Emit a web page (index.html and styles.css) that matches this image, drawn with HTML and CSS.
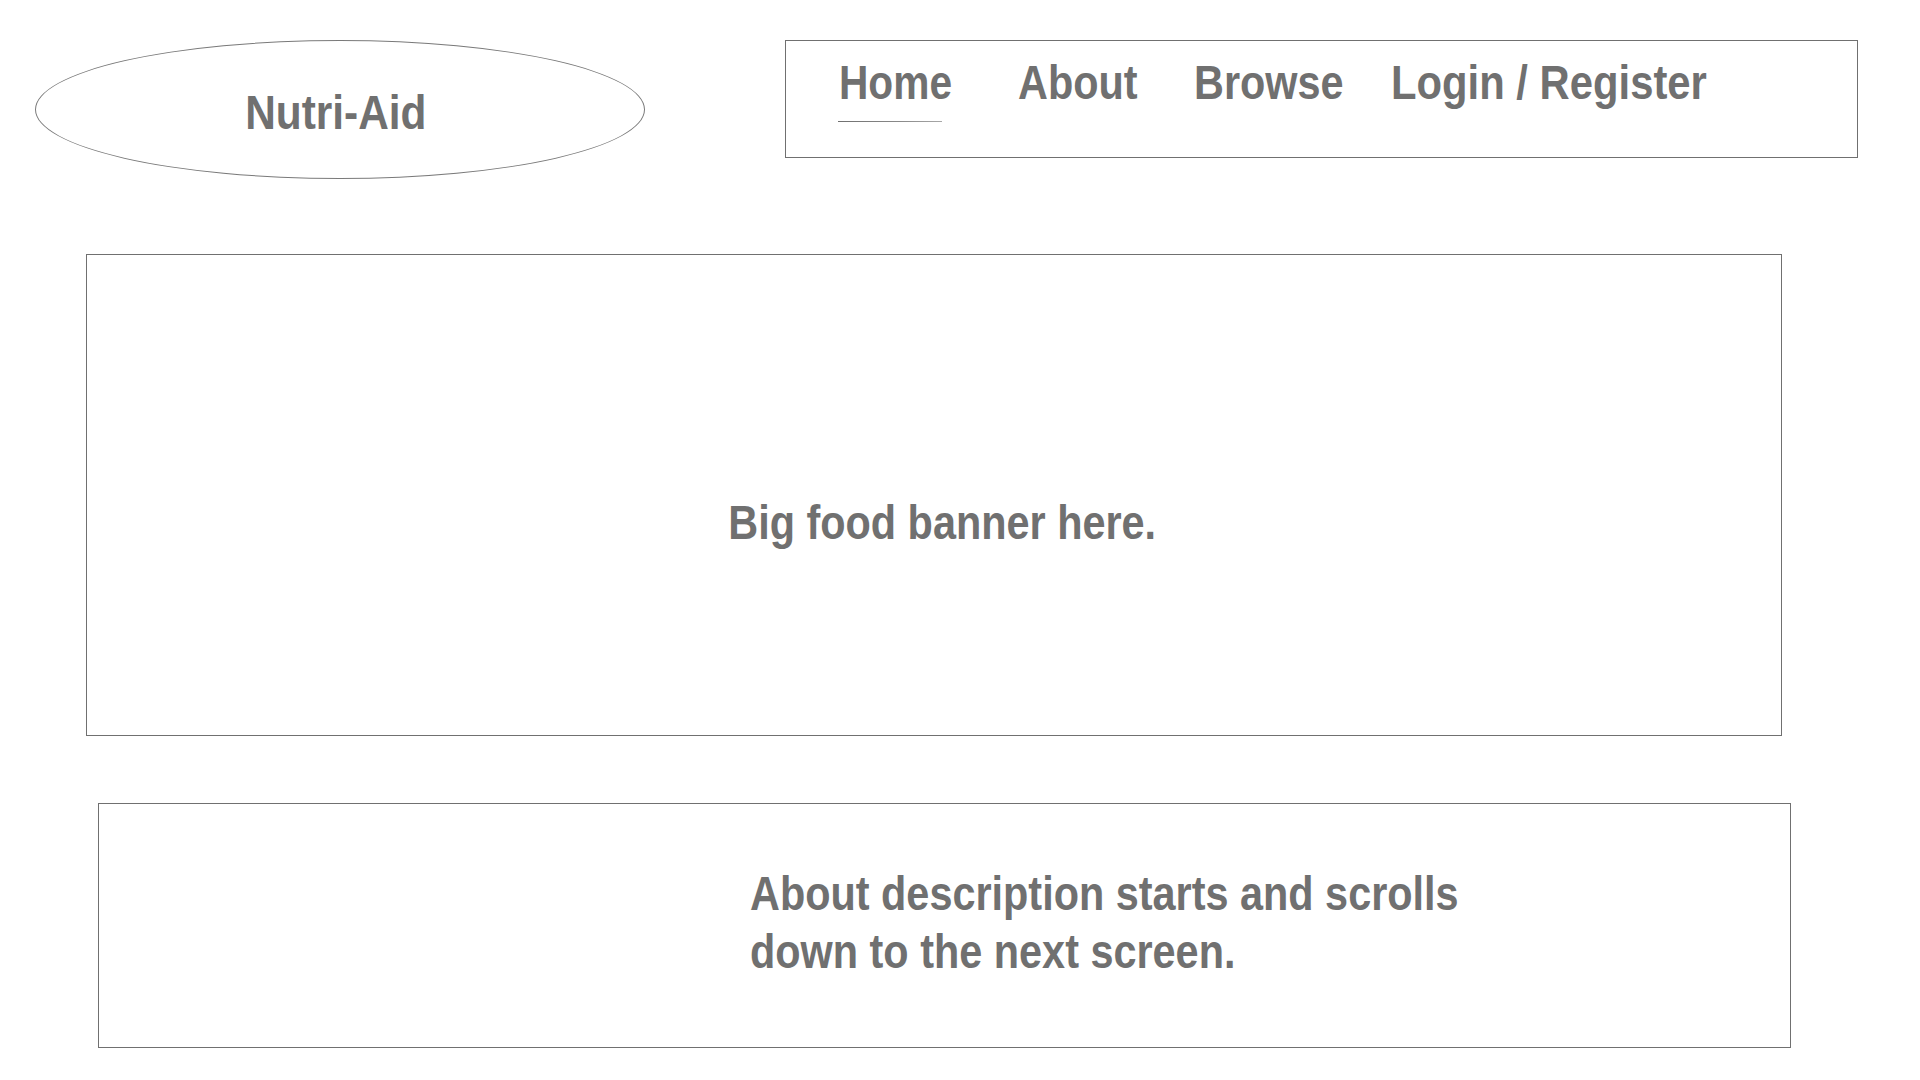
FILE: index.html
```html
<!DOCTYPE html>
<html lang="en">
<head>
<meta charset="utf-8">
<title>Nutri-Aid</title>
<link rel="stylesheet" href="styles.css">
</head>
<body>
<div class="page">
  <header class="header">
    <div class="logo"><span class="logo-text cond">Nutri-Aid</span></div>
    <nav class="nav">
      <a class="nav-item nav-home active"><span class="cond">Home</span></a>
      <a class="nav-item nav-about"><span class="cond">About</span></a>
      <a class="nav-item nav-browse"><span class="cond">Browse</span></a>
      <a class="nav-item nav-login"><span class="cond">Login / Register</span></a>
    </nav>
  </header>
  <section class="banner">
    <p class="banner-text cond">Big food banner here.</p>
  </section>
  <section class="about">
    <p class="about-text cond">About description starts and scrolls<br>down to the next screen.</p>
  </section>
</div>
</body>
</html>
```
FILE: styles.css
```css
html, body {
  margin: 0;
  padding: 0;
  background: #ffffff;
}
body {
  font-family: "Liberation Sans", Arial, sans-serif;
  font-weight: 700;
  color: #707070;
  font-size: 49px;
  line-height: 58px;
}
p { margin: 0; }
.cond {
  display: inline-block;
  white-space: nowrap;
  transform: scaleX(0.845);
  transform-origin: left center;
}
.page {
  padding-top: 40px;
}
.header {
  display: flex;
  align-items: flex-start;
  padding-left: 35px;
}
.logo {
  width: 608px;
  height: 133px;
  padding-top: 4px;
  border: 1px solid #7a7a7a;
  border-radius: 50%;
  display: flex;
  align-items: center;
  justify-content: center;
}
.logo-text {
  transform-origin: center center;
  transform: scaleX(0.865);
  margin-left: -8px;
}
.nav {
  margin-left: 140px;
  width: 1073px;
  height: 118px;
  border: 1px solid #707070;
  box-sizing: border-box;
  display: flex;
  align-items: flex-start;
  padding-top: 12px;
  padding-left: 53px;
}
.nav-item {
  display: block;
  position: relative;
  text-decoration: none;
  color: #707070;
  flex: none;
}
.nav-home { width: 179px; }
.nav-home .cond { transform: scaleX(0.83); }
.nav-about { width: 176px; }
.nav-browse { width: 197px; }
.nav-login .cond { transform: scaleX(0.853); }
.nav-home::after {
  content: "";
  position: absolute;
  left: -1px;
  top: 68px;
  width: 104px;
  height: 1px;
  background: linear-gradient(to right, #707070 0%, #8a8a8a 60%, #a8a8a8 100%);
}
.banner {
  margin: 75px 0 0 86px;
  width: 1696px;
  height: 482px;
  border: 1px solid #707070;
  box-sizing: border-box;
  display: flex;
  align-items: center;
  justify-content: center;
  padding-top: 54px;
  padding-left: 16px;
}
.banner-text {
  transform-origin: center center;
}
.about {
  margin: 67px 0 0 98px;
  width: 1693px;
  height: 245px;
  border: 1px solid #707070;
  box-sizing: border-box;
  padding-top: 60px;
  padding-left: 651px;
}
```
